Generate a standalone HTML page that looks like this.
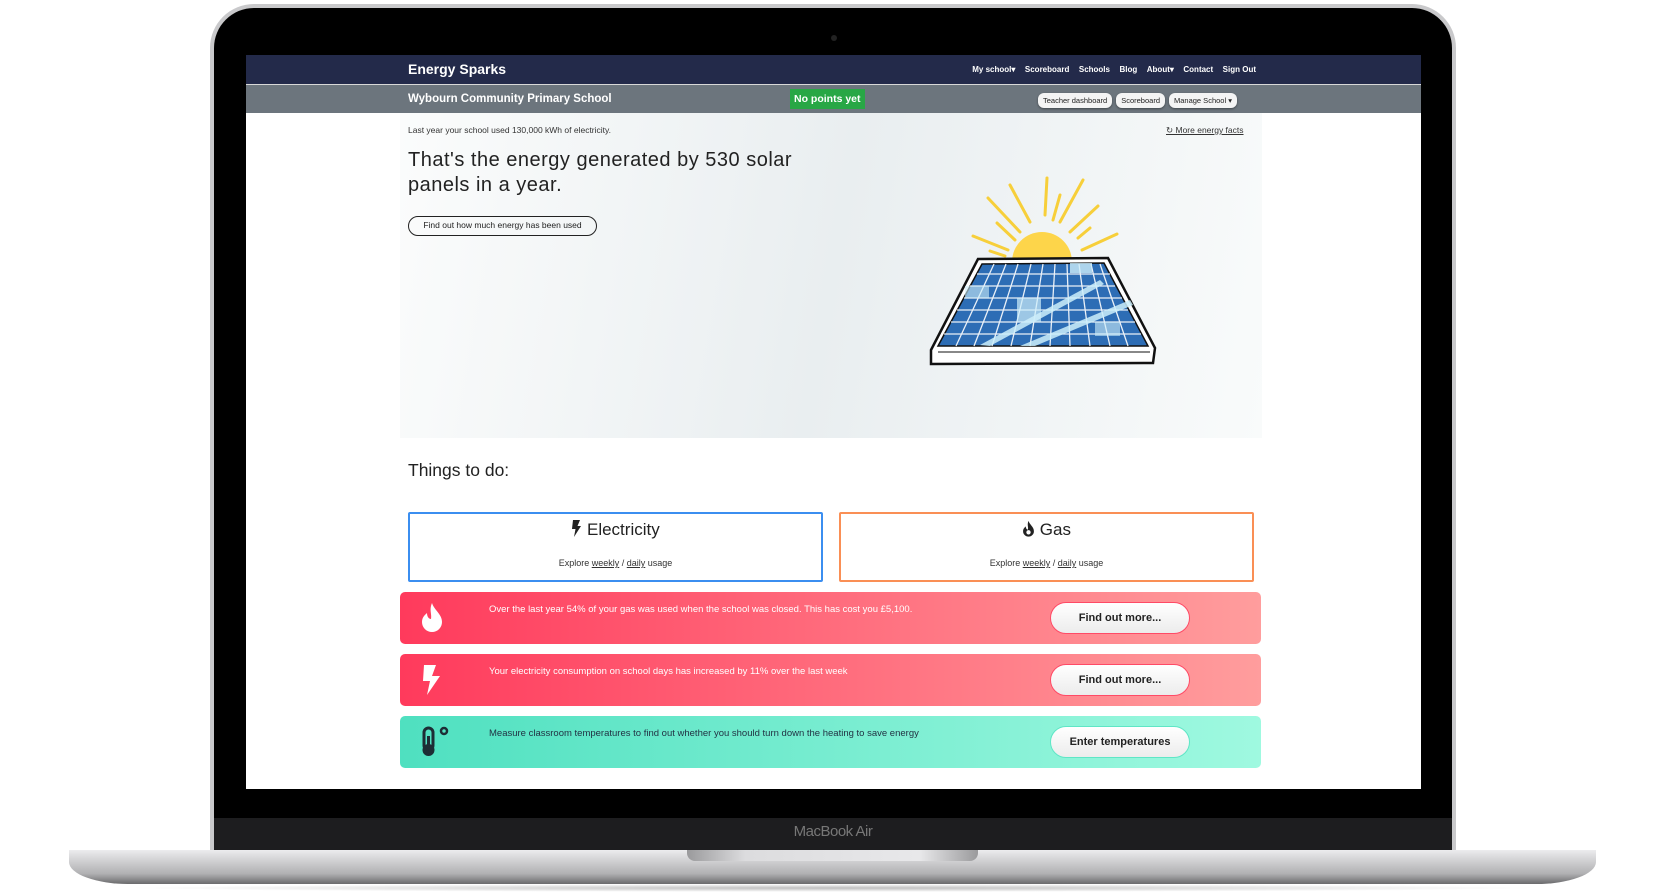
<!DOCTYPE html>
<html><head><meta charset="utf-8"><style>
*{box-sizing:border-box;margin:0;padding:0}
body{width:1666px;height:896px;background:#fff;position:relative;overflow:hidden;font-family:"Liberation Sans",sans-serif}
.abs{position:absolute}
.lid{left:210px;top:4px;width:1246px;height:850px;border-radius:44px 44px 0 0;background:#000;border:4px solid #c9c9cb;border-bottom:none}
.screen{left:246px;top:55px;width:1175px;height:734px;background:#fff;overflow:hidden}
.nav{left:0;top:0;width:1175px;height:30px;background:#232a4a;border-bottom:1px solid #d8d8d8}
.sub{left:0;top:30px;width:1175px;height:28px;background:#6c757d}
.w{color:#fff;font-weight:bold}
.nav .links span{margin-left:9.5px}
.pill{background:#f4f4f4;color:#222;border-radius:6px;font-size:7.5px;padding:3px 5px;display:inline-block;margin-left:4px;box-shadow:0 1px 2px rgba(0,0,0,.4)}
.card{background:#fff;border:2px solid;border-radius:2px;text-align:center}
.alert{border-radius:5px;color:#fff;font-size:9.5px}
.btn{position:absolute;left:650px;top:10px;width:140px;height:32px;border-radius:16px;background:linear-gradient(#fff,#ececec);color:#222;font-size:11px;font-weight:bold;text-align:center;line-height:30px}
</style></head><body>
<div class="abs lid"></div>
<div class="abs" style="left:831px;top:35px;width:6px;height:6px;border-radius:3px;background:#222"></div>
<div class="abs screen">
 <div class="abs nav">
  <div class="abs w" style="left:162px;top:6px;font-size:14px">Energy Sparks</div>
  <div class="abs w links" style="right:165px;top:10px;font-size:8px;white-space:nowrap"><span>My school▾</span><span>Scoreboard</span><span>Schools</span><span>Blog</span><span>About▾</span><span>Contact</span><span>Sign Out</span></div>
 </div>
 <div class="abs sub">
  <div class="abs w" style="left:162px;top:8px;font-size:11.5px">Wybourn Community Primary School</div>
  <div class="abs w" style="left:544px;top:4px;height:20px;background:#28a745;font-size:10.5px;padding:4px 4px">No points yet</div>
  <div class="abs" style="left:788px;top:5px"><span class="pill">Teacher dashboard</span><span class="pill">Scoreboard</span><span class="pill">Manage School ▾</span></div>
 </div>
 <div class="abs" style="left:154px;top:58px;width:862px;height:325px;background:linear-gradient(100deg,#fbfcfc 0%,#e9eef0 50%,#f9fbfb 100%)"></div>
 <div class="abs" style="left:162px;top:70px;font-size:8.5px;color:#333">Last year your school used 130,000 kWh of electricity.</div>
 <div class="abs" style="left:920px;top:70px;font-size:8.5px;color:#333;text-decoration:underline">↻ More energy facts</div>
 <div class="abs" style="left:162px;top:93px;font-size:20px;color:#222;line-height:25px;width:440px;letter-spacing:.5px">That's the energy generated by 530 solar panels in a year.</div>
 <div class="abs" style="left:162px;top:161px;width:189px;height:20px;border:1.5px solid #222;border-radius:10px;font-size:8.5px;line-height:17px;text-align:center;color:#222">Find out how much energy has been used</div>
 <svg class="abs" style="left:664px;top:110px" width="260" height="260" viewBox="910 165 260 260">
  <g stroke="#f7cf3a" stroke-width="3" stroke-linecap="round">
   <line x1="1045" y1="215" x2="1047" y2="178"/><line x1="1053" y1="220" x2="1060" y2="195"/>
   <line x1="1060" y1="222" x2="1083" y2="180"/><line x1="1070" y1="232" x2="1098" y2="206"/>
   <line x1="1078" y1="238" x2="1090" y2="228"/><line x1="1082" y1="250" x2="1117" y2="234"/>
   <line x1="1030" y1="222" x2="1010" y2="185"/><line x1="1020" y1="232" x2="988" y2="198"/>
   <line x1="1015" y1="240" x2="997" y2="223"/><line x1="1008" y1="250" x2="973" y2="236"/>
   <line x1="1005" y1="256" x2="990" y2="251"/>
  </g>
  <path d="M1012 262a30 30 0 0 1 60 0z" fill="#fdd54a"/>
  <path d="M931 350L978 259L1108 258L1155 348L1153 363L931 364Z" fill="#fff" stroke="#111" stroke-width="2.5"/>
  <path d="M938 346L982 264L1104 263L1148 346Z" fill="#2d6db5" stroke="#111" stroke-width="1.5"/>
  <g stroke="#fff" stroke-width="1.3" opacity=".9">
   <line x1="977" y1="274" x2="1110" y2="274"/><line x1="970" y1="286" x2="1115" y2="286"/><line x1="964" y1="298" x2="1122" y2="298"/>
   <line x1="957" y1="310" x2="1128" y2="310"/><line x1="951" y1="322" x2="1135" y2="322"/><line x1="944" y1="334" x2="1141" y2="334"/>
   <line x1="994" y1="264" x2="956" y2="346"/><line x1="1006" y1="264" x2="974" y2="346"/><line x1="1018" y1="264" x2="992" y2="346"/>
   <line x1="1031" y1="264" x2="1011" y2="346"/><line x1="1043" y1="264" x2="1030" y2="346"/><line x1="1055" y1="264" x2="1050" y2="346"/>
   <line x1="1067" y1="264" x2="1070" y2="346"/><line x1="1079" y1="264" x2="1090" y2="346"/><line x1="1091" y1="264" x2="1110" y2="346"/>
   <line x1="1100" y1="264" x2="1128" y2="346"/>
  </g>
  <path d="M980 345L1100 280L1104 284L990 346Z M1020 346L1130 300L1133 305L1035 346Z" fill="#cdeefa" opacity=".85"/>
  <rect x="1017" y="298" width="24" height="24" fill="#cdeefa" opacity=".7"/><rect x="1070" y="263" width="22" height="10" fill="#cdeefa" opacity=".8"/>
  <rect x="965" y="286" width="24" height="12" fill="#cdeefa" opacity=".6"/><rect x="1095" y="322" width="25" height="14" fill="#cdeefa" opacity=".6"/>
  <line x1="938" y1="352" x2="1150" y2="352" stroke="#111" stroke-width="1"/>
 </svg>
 <div class="abs" style="left:162px;top:405px;font-size:17.5px;color:#222">Things to do:</div>
 <div class="abs card" style="left:162px;top:457px;width:415px;height:70px;border-color:#3b8ef0">
  <div style="font-size:17px;margin-top:6px;color:#222"><svg width="11" height="17" viewBox="0 0 11 17" style="vertical-align:-2px"><path d="M2 0H9L6.5 6H10L3 17L4.5 9H1Z" fill="#222"/></svg> Electricity</div>
  <div style="font-size:9px;margin-top:18px;color:#333">Explore <u>weekly</u> / <u>daily</u> usage</div></div>
 <div class="abs card" style="left:593px;top:457px;width:415px;height:70px;border-color:#fa8f55">
  <div style="font-size:17px;margin-top:6px;color:#222"><svg width="13" height="17" viewBox="0 0 24 30" style="vertical-align:-2px"><path d="M12 1C14 8 22 12 22 20a10 10 0 0 1-20 0c0-5 3-7 5-9 0 4 2 6 4 6 1-5-2-9 1-16z" fill="#222"/><circle cx="12" cy="22" r="4" fill="#fff"/></svg> Gas</div>
  <div style="font-size:9px;margin-top:18px;color:#333">Explore <u>weekly</u> / <u>daily</u> usage</div></div>
 <div class="abs alert" style="left:154px;top:537px;width:861px;height:52px;background:linear-gradient(90deg,#ff3a5c,#ff9d9d)">
  <svg class="abs" style="left:20px;top:10px" width="24" height="30" viewBox="0 0 24 30"><path d="M12 1C14 8 22 12 22 20a10 10 0 0 1-20 0c0-5 3-7 5-9 0 4 2 6 4 6 1-5-2-9 1-16z" fill="#fff"/></svg>
  <div class="abs" style="left:89px;top:12px">Over the last year 54% of your gas was used when the school was closed. This has cost you £5,100.</div>
  <div class="btn" style="border:1px solid #ff4a66">Find out more...</div></div>
 <div class="abs alert" style="left:154px;top:599px;width:861px;height:52px;background:linear-gradient(90deg,#ff3a5c,#ff9d9d)">
  <svg class="abs" style="left:20px;top:10px" width="22" height="32" viewBox="0 0 22 32"><path d="M4 1H16L12 12H20L7 31L10 17H3Z" fill="#fff"/></svg>
  <div class="abs" style="left:89px;top:12px">Your electricity consumption on school days has increased by 11% over the last week</div>
  <div class="btn" style="border:1px solid #ff4a66">Find out more...</div></div>
 <div class="abs alert" style="left:154px;top:661px;width:861px;height:52px;background:linear-gradient(90deg,#4fe0c0,#9ff9e0);color:#234">
  <svg class="abs" style="left:20px;top:10px" width="30" height="32" viewBox="0 0 30 32"><rect x="4" y="2" width="9" height="22" rx="4.5" fill="none" stroke="#1d2d35" stroke-width="3"/><circle cx="8.5" cy="24" r="6" fill="#1d2d35"/><rect x="7" y="10" width="3" height="12" fill="#1d2d35"/><circle cx="24" cy="5" r="3" fill="none" stroke="#1d2d35" stroke-width="2.5"/></svg>
  <div class="abs" style="left:89px;top:12px">Measure classroom temperatures to find out whether you should turn down the heating to save energy</div>
  <div class="btn" style="border:1px solid #5fe6c6">Enter temperatures</div></div>
</div>
<div class="abs" style="left:214px;top:818px;width:1238px;height:32px;background:#1d1d1f"></div>
<div class="abs" style="left:0;width:1666px;top:823px;text-align:center;font-size:15px;color:#777;letter-spacing:-.5px">MacBook Air</div>
<div class="abs" style="left:69px;top:850px;width:1527px;height:34px;border-radius:0 0 60px 60px/0 0 22px 22px;background:linear-gradient(#ececee 0%,#d6d6d8 25%,#b0b0b2 70%,#6a6a6c 100%)"></div>
<div class="abs" style="left:687px;top:850px;width:291px;height:11px;border-radius:0 0 8px 8px;background:linear-gradient(90deg,#9a9a9c,#dcdcde 20%,#e8e8ea 80%,#9a9a9c)"></div>
<div class="abs" style="left:120px;top:884px;width:1426px;height:8px;background:radial-gradient(ellipse at center,rgba(0,0,0,.25),rgba(0,0,0,0) 70%)"></div>
</body></html>
